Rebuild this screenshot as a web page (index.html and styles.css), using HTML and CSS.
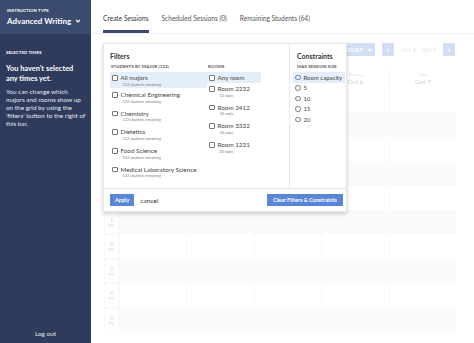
FILE: index.html
```html
<!DOCTYPE html>
<html lang="en">
<head>
  <meta charset="UTF-8">
  <title>Create Sessions</title>
  <link rel="stylesheet" href="styles.css">
</head>
<body>
  <aside class="sidebar">
    <div class="sidebar-top">
      <div class="tiny-label">Instruction type</div>
      <div class="type-select">Advanced Writing
        <svg width="6" height="4" viewBox="0 0 6 4"><path d="M1 1l2 2 2-2" fill="none" stroke="#fff" stroke-width="1.2"/></svg>
      </div>
    </div>
    <div class="sidebar-body">
      <div class="tiny-label">Selected times</div>
      <h3>You haven't selected any times yet.</h3>
      <p>You can change which majors and rooms show up on the grid by using the 'filters' button to the right of this bar.</p>
    </div>
    <div class="logout">Log out</div>
  </aside>

  <main class="main">
    <nav class="tabs">
      <a class="tab active">Create Sessions</a>
      <a class="tab">Scheduled Sessions (0)</a>
      <a class="tab">Remaining Students (64)</a>
    </nav>

    <div class="faded">
      <div class="toolbar">
        <button class="tool-btn wide">ADULT
          <svg width="6" height="4" viewBox="0 0 6 4"><path d="M1 1l2 2 2-2" fill="none" stroke="#fff" stroke-width="1.2"/></svg>
        </button>
        <button class="tool-btn square">&lsaquo;</button>
        <span class="range">Oct 3 - Oct 7</span>
        <button class="tool-btn square">&rsaquo;</button>
      </div>

      <div class="grid">
        <div class="grid-head">
          <div class="time-cell"></div>
          <div class="day"></div>
          <div class="day"></div>
          <div class="day"></div>
          <div class="day"><small>Thursday</small>Oct 6</div>
          <div class="day"><small>Friday</small>Oct 7</div>
        </div>
        <div class="row"><div class="time-cell"></div><div class="slot"></div><div class="slot"></div><div class="slot"></div><div class="slot"></div><div class="slot"></div></div>
        <div class="row alt"><div class="time-cell"></div><div class="slot"></div><div class="slot"></div><div class="slot"></div><div class="slot"></div><div class="slot"></div></div>
        <div class="row"><div class="time-cell"></div><div class="slot"></div><div class="slot"></div><div class="slot"></div><div class="slot"></div><div class="slot"></div></div>
        <div class="row alt"><div class="time-cell"></div><div class="slot"></div><div class="slot"></div><div class="slot"></div><div class="slot"></div><div class="slot"></div></div>
        <div class="row"><div class="time-cell"></div><div class="slot"></div><div class="slot"></div><div class="slot"></div><div class="slot"></div><div class="slot"></div></div>
        <div class="row alt"><div class="time-cell">1<small>PM</small></div><div class="slot"></div><div class="slot"></div><div class="slot"></div><div class="slot"></div><div class="slot"></div></div>
        <div class="row"><div class="time-cell">2<small>PM</small></div><div class="slot"></div><div class="slot"></div><div class="slot"></div><div class="slot"></div><div class="slot"></div></div>
        <div class="row alt"><div class="time-cell">3<small>PM</small></div><div class="slot"></div><div class="slot"></div><div class="slot"></div><div class="slot"></div><div class="slot"></div></div>
        <div class="row"><div class="time-cell">4<small>PM</small></div><div class="slot"></div><div class="slot"></div><div class="slot"></div><div class="slot"></div><div class="slot"></div></div>
        <div class="row alt"><div class="time-cell">5<small>PM</small></div><div class="slot"></div><div class="slot"></div><div class="slot"></div><div class="slot"></div><div class="slot"></div></div>
      </div>
    </div>

    <div class="popup">
      <div class="popup-body">
        <section class="filters">
          <h4>Filters</h4>
          <div class="filter-cols">
            <div class="col majors">
              <div class="tiny-label">Students by major (122)</div>
              <label class="opt selected"><span class="box"></span><span class="txt">All majors<em>122 students remaining</em></span></label>
              <label class="opt"><span class="box"></span><span class="txt">Chemical Engineering<em>122 students remaining</em></span></label>
              <label class="opt"><span class="box"></span><span class="txt">Chemistry<em>122 students remaining</em></span></label>
              <label class="opt"><span class="box"></span><span class="txt">Dietetics<em>122 students remaining</em></span></label>
              <label class="opt"><span class="box"></span><span class="txt">Food Science<em>122 students remaining</em></span></label>
              <label class="opt"><span class="box"></span><span class="txt">Medical Laboratory Science<em>122 students remaining</em></span></label>
            </div>
            <div class="col rooms">
              <div class="tiny-label">Rooms</div>
              <label class="opt selected"><span class="box"></span><span class="txt">Any room</span></label>
              <label class="opt"><span class="box"></span><span class="txt">Room 2232<em>32 seats</em></span></label>
              <label class="opt"><span class="box"></span><span class="txt">Room 2412<em>24 seats</em></span></label>
              <label class="opt"><span class="box"></span><span class="txt">Room 3332<em>24 seats</em></span></label>
              <label class="opt"><span class="box"></span><span class="txt">Room 1231<em>20 seats</em></span></label>
            </div>
          </div>
        </section>
        <section class="constraints">
          <h4>Constraints</h4>
          <div class="tiny-label">Max session size</div>
          <label class="radio selected"><span class="dot on"></span>Room capacity</label>
          <label class="radio"><span class="dot"></span>5</label>
          <label class="radio"><span class="dot"></span>10</label>
          <label class="radio"><span class="dot"></span>15</label>
          <label class="radio"><span class="dot"></span>20</label>
        </section>
      </div>
      <footer class="popup-foot">
        <button class="btn">Apply</button>
        <span class="cancel">cancel</span>
        <button class="btn clear">Clear Filters &amp; Constraints</button>
      </footer>
    </div>
  </main>
</body>
</html>
```

FILE: styles.css
```css
* { margin: 0; padding: 0; box-sizing: border-box; }
html, body { height: 100%; }
body {
  display: flex;
  height: 343px;
  overflow: hidden;
  font-family: 'Lato', 'Liberation Sans', sans-serif;
  color: #333;
  background: #fff;
}

.tiny-label { font-size: 4.3px; font-weight: 700; text-transform: uppercase; letter-spacing: 0.1px; }

/* sidebar */
.sidebar { width: 91px; flex-shrink: 0; background: #2e3b5d; color: #fff; display: flex; flex-direction: column; }
.sidebar-top { height: 34px; background: #3b4a6f; padding: 8px 7px 0; }
.type-select { margin-top: 3px; font-size: 8px; font-weight: 700; display: flex; align-items: center; gap: 4px; }
.sidebar-body { padding: 16px 6px 0; }
.sidebar-body h3 { margin-top: 9px; font-size: 7.4px; line-height: 9.5px; font-weight: 700; width: 76px; }
.sidebar-body p { margin-top: 5px; font-size: 6.4px; line-height: 8px; color: #e6e9f0; width: 82px; }
.logout { margin-top: auto; text-align: center; font-size: 6.4px; padding-bottom: 6px; color: #e8ebf2; }

/* main */
.main { flex: 1; position: relative; }
.tabs { height: 34px; display: flex; align-items: flex-end; gap: 13px; padding-left: 12px; border-bottom: 1px solid #eef0f3; }
.tab { font-size: 6.6px; color: #555; padding-bottom: 8px; border-bottom: 3px solid transparent; }
.tab.active { color: #333; border-bottom-color: #3b4a6f; }

.faded { opacity: 0.3; }
.toolbar { height: 31px; display: flex; align-items: center; justify-content: flex-end; gap: 6px; padding-right: 19px; }
.tool-btn { background: #6e93d8; color: #fff; border: none; height: 13px; font-family: inherit; font-size: 6px; font-weight: 700; display: flex; align-items: center; justify-content: center; }
.tool-btn.wide { width: 34px; gap: 4px; margin-right: 1px; }
.tool-btn.square { width: 12px; font-size: 9px; }
.range { font-size: 6px; color: #999; padding: 0 1px; }

.grid { margin: 4px 18px 0 13px; }
.grid-head { display: flex; height: 19px; }
.grid-head .day { flex: 1; border-left: 1px solid #e6e6e6; text-align: center; font-size: 6.4px; color: #555; line-height: 7px; padding-top: 2px; }
.grid-head .day small { display: block; font-size: 3.6px; color: #999; }
.row { display: flex; height: 24.4px; }
.row.alt { background: #f0f0f0; }
.time-cell { width: 15px; flex-shrink: 0; text-align: center; font-size: 5.6px; color: #777; line-height: 6px; padding-top: 6px; background: #fff; border: 1px solid #eee; }
.grid-head .time-cell { border: none; }
.time-cell small { display: block; font-size: 3.4px; }
.slot { flex: 1; border-left: 1px solid #eaeaea; }
.row.alt .slot { border-left-color: transparent; }

/* popup */
.popup {
  position: absolute; left: 12px; top: 43px; width: 244px;
  background: #fff; border: 1px solid #e4e6ea;
  box-shadow: 0 2px 4px rgba(0, 0, 0, 0.18);
}
.popup-body { display: flex; height: 144px; }
.popup h4 { font-size: 7px; font-weight: 700; color: #333; }
.filters { width: 186px; border-right: 1px solid #e4e6ea; padding: 8px 0 0 6px; }
.filter-cols { display: flex; margin-top: 4px; }
.col .tiny-label { color: #555; margin-bottom: 3px; margin-left: 1px; }
.majors { width: 97px; }
.rooms { width: 54px; }
.opt { display: flex; align-items: flex-start; gap: 3px; font-size: 6.3px; color: #444; padding: 2px 2px 0; height: 18.7px; }
.opt.selected { background: #e4eefa; height: 16px; margin-bottom: 1px; }
.rooms .opt.selected { height: 11px; margin-bottom: 0; }
.txt { display: block; line-height: 7.5px; white-space: nowrap; }
.opt em { display: block; font-size: 3.9px; color: #777; margin-left: 2px; line-height: 5px; }
.box { width: 5.5px; height: 5.5px; border: 0.8px solid #777; border-radius: 1px; margin-top: 1px; flex-shrink: 0; background: #fff; }

.constraints { flex: 1; padding: 8px 1px 0 3px; }
.constraints h4 { margin-left: 4px; }
.constraints .tiny-label { color: #555; margin: 4px 0 3px 4px; }
.radio { display: flex; align-items: center; gap: 3px; font-size: 6px; color: #444; height: 10.5px; padding-left: 2px; white-space: nowrap; }
.radio.selected { background: #e4eefa; }
.dot { width: 5.5px; height: 5.5px; border: 0.8px solid #777; border-radius: 50%; background: #fff; flex-shrink: 0; }
.dot.on { border: 1.6px solid #4a74c9; }

.popup-foot { height: 23px; border-top: 1px solid #e4e6ea; display: flex; align-items: center; padding: 0 3px 0 6px; }
.btn { background: #5a86d8; color: #fff; border: none; height: 12px; padding: 0 5px; font-family: inherit; font-size: 5.5px; font-weight: 700; }
.cancel { margin-left: 6px; font-size: 6.5px; color: #333; }
.btn.clear { margin-left: auto; width: 76px; padding: 0; }
```
